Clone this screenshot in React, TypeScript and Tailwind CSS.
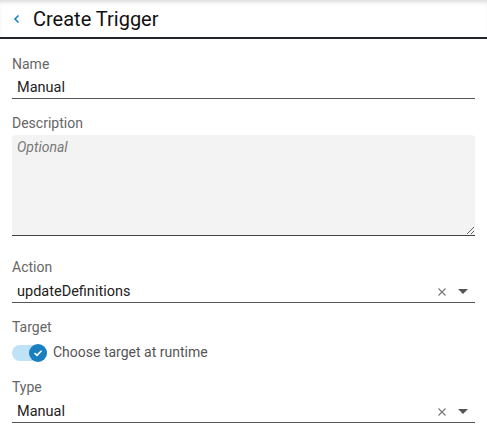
import React, { useState } from 'react';

const font = { fontFamily: 'Roboto, "Liberation Sans", sans-serif' };

const SelectField: React.FC<{ label: string; value: string }> = ({ label, value }) => (
  <div>
    <div className="text-[14px] leading-[18px] text-[#666]">{label}</div>
    <div className="mt-[5px] flex h-[22px] items-center border-b border-[#555] pl-[5px] pr-[7px]">
      <span className="flex-1 text-[14.5px] text-[#222]">{value}</span>
      <svg width="8" height="8" viewBox="0 0 8 8" className="mr-[12px]">
        <path d="M0.5 0.5 L7.5 7.5 M7.5 0.5 L0.5 7.5" stroke="#777" strokeWidth="1.1" />
      </svg>
      <svg width="10" height="5" viewBox="0 0 10 5">
        <path d="M0 0 L10 0 L5 5 Z" fill="#555" />
      </svg>
    </div>
  </div>
);

export default function App() {
  const [name, setName] = useState('Manual');
  const [desc, setDesc] = useState('');
  const [runtime, setRuntime] = useState(true);

  return (
    <div className="h-[438px] w-[487px] bg-white" style={font}>
      <div className="flex h-[39px] items-center border-b-2 border-[#22242f] bg-white pl-[13px] shadow-[inset_0_4px_4px_-2px_rgba(0,0,0,0.15)]">
        <svg width="8" height="10" viewBox="0 0 8 10" className="mr-[12px]">
          <path d="M5.5 1.5 L2 5 L5.5 8.5" stroke="#1a7fc1" strokeWidth="1.6" fill="none" />
        </svg>
        <span className="text-[20px] text-[#111]">Create Trigger</span>
      </div>

      <div className="flex flex-col px-[12px] pt-[16px]">
        <div>
          <div className="text-[14px] leading-[18px] text-[#666]">Name</div>
          <input
            value={name}
            onChange={(e) => setName(e.target.value)}
            className="mt-[4px] block h-[22px] w-full border-b border-[#555] pl-[5px] text-[14.5px] text-[#222] outline-none"
          />
        </div>

        <div className="mt-[15px]">
          <div className="text-[14px] leading-[18px] text-[#666]">Description</div>
          <textarea
            value={desc}
            onChange={(e) => setDesc(e.target.value)}
            placeholder="Optional"
            className="mt-[3px] block h-[101px] w-full rounded-t-[4px] border-b border-[#444] bg-[#f3f3f3] px-[5px] pt-[2px] text-[14px] leading-[20px] italic text-[#222] outline-none placeholder:text-[#777]"
          />
        </div>

        <div className="mt-[22px]">
          <SelectField label="Action" value="updateDefinitions" />
        </div>

        <div className="mt-[15px]">
          <div className="text-[14px] leading-[18px] text-[#666]">Target</div>
          <button
            onClick={() => setRuntime(!runtime)}
            className="mt-[6px] flex items-center"
          >
            <span className="relative block h-[16px] w-[35px] rounded-full bg-[#bfe2f6]">
              <span className="absolute right-0 top-[-1px] flex h-[18px] w-[18px] items-center justify-center rounded-full bg-[#1a7fc1]">
                <svg width="10" height="8" viewBox="0 0 10 8">
                  <path d="M1.5 4 L4 6.3 L8.5 1.7" stroke="white" strokeWidth="1.6" fill="none" />
                </svg>
              </span>
            </span>
            <span className="ml-[6px] text-[14px] text-[#555]">Choose target at runtime</span>
          </button>
        </div>

        <div className="mt-[15px]">
          <SelectField label="Type" value="Manual" />
        </div>
      </div>
    </div>
  );
}
